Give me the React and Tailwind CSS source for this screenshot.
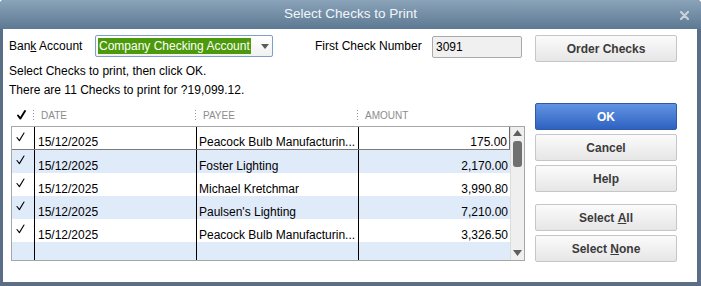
import React from 'react';

const checks = [
  { date: '15/12/2025', payee: 'Peacock Bulb Manufacturin...', amount: '175.00' },
  { date: '15/12/2025', payee: 'Foster Lighting', amount: '2,170.00' },
  { date: '15/12/2025', payee: 'Michael Kretchmar', amount: '3,990.80' },
  { date: '15/12/2025', payee: "Paulsen's Lighting", amount: '7,210.00' },
  { date: '15/12/2025', payee: 'Peacock Bulb Manufacturin...', amount: '3,326.50' },
];

const Tick = ({ bold }) => (
  <svg width="9" height="10" viewBox="0 0 9 10">
    <path
      d="M1 5.5 L3.4 8.6 L8 1"
      fill="none"
      stroke="#000"
      strokeWidth={bold ? 1.9 : 1.1}
      strokeLinecap="round"
      strokeLinejoin="round"
    />
  </svg>
);

const Dots = () => (
  <div className="flex flex-col gap-[2px]">
    <span className="w-[1px] h-[1px] bg-[#9a9a9a]" />
    <span className="w-[1px] h-[1px] bg-[#9a9a9a]" />
    <span className="w-[1px] h-[1px] bg-[#9a9a9a]" />
    <span className="w-[1px] h-[1px] bg-[#9a9a9a]" />
  </div>
);

const Btn = ({ children, primary, className = '' }) => (
  <button
    type="button"
    className={
      'w-[142px] h-[27px] rounded-[2px] border text-[12px] font-bold flex items-center justify-center ' +
      (primary
        ? 'border-[#2d5ba9] bg-gradient-to-b from-[#6294e2] to-[#2f62c1] text-white '
        : 'border-[#c6c6c6] bg-gradient-to-b from-[#fbfbfb] to-[#e6e6e6] text-[#3b3b3b] ') +
      className
    }
  >
    {children}
  </button>
);

export default function App() {
  return (
    <div
      className="w-[701px] h-[286px] bg-[#5a6f86] flex flex-col rounded-t-[4px] overflow-hidden text-black"
      style={{ fontFamily: '"Liberation Sans", Arial, sans-serif' }}
    >
      {/* Title bar */}
      <div className="h-[29px] shrink-0 relative flex items-center justify-center bg-gradient-to-b from-[#8aa3b9] to-[#5d7993]">
        <span className="text-[13.5px] text-[#f3f6f9]">Select Checks to Print</span>
        <svg className="absolute right-[12px] top-[11px]" width="9" height="9" viewBox="0 0 9 9">
          <path d="M1 1 L8 8 M8 1 L1 8" stroke="#c9d2db" strokeWidth="2.2" strokeLinecap="round" />
        </svg>
      </div>

      {/* Body */}
      <div className="flex-1 ml-[3px] mr-[4px] mb-[4px] bg-white flex pt-[6px]">
        {/* Left column */}
        <div className="ml-[6px] w-[520px] flex flex-col text-[12px]">
          <div className="h-[22px] flex items-center">
            <span className="w-[86px]">
              Ban<span className="underline">k</span> Account
            </span>
            <div className="w-[178px] h-[22px] rounded-[2px] border border-[#7f9fc8] bg-gradient-to-b from-[#ffffff] to-[#f1f1f1] flex items-center pl-[2px]">
              <span className="bg-[#4c9a0b] text-white h-[16px] leading-[16px] pl-[1px] w-[153px]">
                Company Checking Account
              </span>
              <svg className="ml-[10px]" width="8" height="5" viewBox="0 0 8 5">
                <path d="M0 0 H8 L4 5 Z" fill="#5a5a5a" />
              </svg>
            </div>
            <span className="ml-[42px] w-[117px]">First Check Number</span>
            <div className="w-[90px] h-[22px] mt-[2px] rounded-[2px] border border-[#a9a9a9] bg-[#f0f0f0] flex items-center pl-[3px]">
              3091
            </div>
          </div>

          <div className="mt-[5px] leading-[19px]">Select Checks to print, then click OK.</div>
          <div className="leading-[19px]">There are 11 Checks to print for ?19,099.12.</div>

          {/* Header */}
          <div className="mt-[4px] h-[22px] ml-[2px] flex items-center text-[10px] text-[#8c8c8c]">
            <div className="w-[22px] pl-[6px] flex items-center">
              <Tick bold />
            </div>
            <div className="w-[162px] flex items-center">
              <Dots />
              <span className="pl-[7px]">DATE</span>
            </div>
            <div className="w-[162px] flex items-center">
              <Dots />
              <span className="pl-[7px]">PAYEE</span>
            </div>
            <div className="flex items-center">
              <Dots />
              <span className="pl-[7px]">AMOUNT</span>
            </div>
          </div>

          {/* Table */}
          <div className="ml-[2px] w-[514px] h-[135px] border border-[#a7a7a7] flex overflow-hidden">
            <div className="flex-1 flex flex-col">
              {checks.map((c, i) => (
                <div
                  key={i}
                  className={
                    'h-[23px] shrink-0 flex ' +
                    (i % 2 === 1 ? 'bg-[#e0ebfa] ' : 'bg-white ') +
                    (i === 0 ? 'border-b border-[#7a7a7a] h-[22px]' : '')
                  }
                >
                  <div className="w-[23px] border-r border-black pl-[4px] pt-[5px]">
                    <Tick />
                  </div>
                  <div className="w-[162px] border-r border-black pl-[3px] flex items-end leading-[14px]">
                    {c.date}
                  </div>
                  <div className="w-[162px] border-r border-black pl-[2px] flex items-end leading-[14px] whitespace-nowrap overflow-hidden">
                    {c.payee}
                  </div>
                  <div
                    className={
                      'flex-1 pr-[2px] flex items-end justify-end leading-[14px] ' +
                      (i === 0 ? 'border-r border-[#6b6b6b]' : '')
                    }
                  >
                    {c.amount}
                  </div>
                </div>
              ))}
              <div className="flex-1 flex bg-[#e0ebfa]">
                <div className="w-[23px] border-r border-black" />
                <div className="w-[162px] border-r border-black" />
                <div className="w-[162px] border-r border-black" />
                <div className="flex-1" />
              </div>
            </div>

            {/* Scrollbar */}
            <div className="w-[14px] bg-[#efefef] border-l border-[#dcdcdc] flex flex-col items-center">
              <svg className="mt-[3px]" width="9" height="6" viewBox="0 0 9 6">
                <path d="M4.5 0 L9 6 H0 Z" fill="#5f5f5f" />
              </svg>
              <div className="mt-[5px] w-[9px] h-[26px] rounded-[3px] bg-[#707070]" />
              <div className="flex-1" />
              <svg className="mb-[4px]" width="9" height="6" viewBox="0 0 9 6">
                <path d="M0 0 H9 L4.5 6 Z" fill="#5f5f5f" />
              </svg>
            </div>
          </div>
        </div>

        {/* Right column */}
        <div className="ml-[6px] flex flex-col">
          <Btn>Order Checks</Btn>
          <Btn primary className="mt-[41px]">OK</Btn>
          <Btn className="mt-[4px]">Cancel</Btn>
          <Btn className="mt-[4px]">Help</Btn>
          <Btn className="mt-[12px]">
            Select&nbsp;<span className="underline">A</span>ll
          </Btn>
          <Btn className="mt-[4px]">
            Select&nbsp;<span className="underline">N</span>one
          </Btn>
        </div>
      </div>
    </div>
  );
}
